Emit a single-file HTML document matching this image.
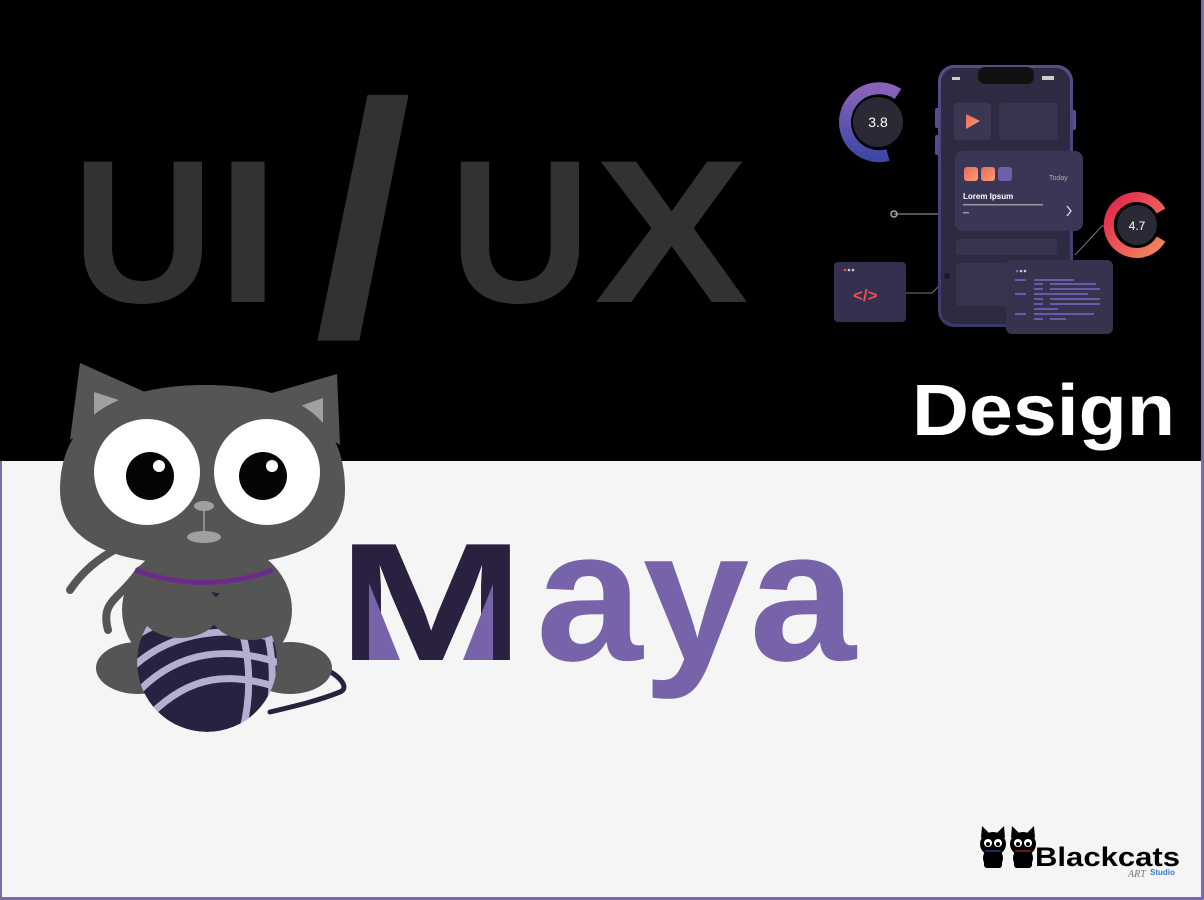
<!DOCTYPE html>
<html><head><meta charset="utf-8"><style>
html,body{margin:0;padding:0;background:#000;}
svg{display:block;}
</style></head><body>
<svg width="1204" height="900" viewBox="0 0 1204 900" xmlns="http://www.w3.org/2000/svg">
<defs>
<linearGradient id="g38" x1="0" y1="0" x2="0" y2="1"><stop offset="0" stop-color="#8a62b8"/><stop offset="1" stop-color="#3f47a6"/></linearGradient>
<linearGradient id="g47" x1="0" y1="0" x2="1" y2="1"><stop offset="0" stop-color="#e3204f"/><stop offset="1" stop-color="#f08a5d"/></linearGradient>
<linearGradient id="ph" x1="0" y1="0" x2="0" y2="1"><stop offset="0" stop-color="#5a4a8a"/><stop offset="1" stop-color="#3a3a6a"/></linearGradient>
<linearGradient id="org" x1="0" y1="0" x2="1" y2="1"><stop offset="0" stop-color="#f0685a"/><stop offset="1" stop-color="#f5a070"/></linearGradient>
<clipPath id="ball"><circle cx="207" cy="662" r="70"/></clipPath>
</defs>
<rect x="0" y="0" width="1204" height="461" fill="#000"/>
<rect x="0" y="461" width="1204" height="439" fill="#f5f5f5"/>
<rect x="0" y="461" width="2" height="439" fill="#7a6bb0"/>
<rect x="1201" y="0" width="3" height="900" fill="#7a6bb0"/>
<rect x="0" y="897" width="1204" height="3" fill="#7a6bb0"/>

<!-- UI / UX -->
<g fill="#333230" font-family="Liberation Sans, sans-serif" font-weight="bold" font-size="204">
<text x="72" y="302" textLength="142" lengthAdjust="spacingAndGlyphs">U</text>
<text x="216" y="302" textLength="64" lengthAdjust="spacingAndGlyphs">I</text>
<text x="449" y="302" textLength="142" lengthAdjust="spacingAndGlyphs">U</text>
<text x="594" y="302" textLength="155" lengthAdjust="spacingAndGlyphs">X</text>
</g>
<text x="314" y="334" font-family="Liberation Sans, sans-serif" font-weight="bold" font-size="330" fill="#333230" textLength="98" lengthAdjust="spacingAndGlyphs">/</text>

<!-- Design -->
<text x="912" y="435" font-family="Liberation Sans, sans-serif" font-weight="bold" font-size="72" fill="#fff" textLength="263" lengthAdjust="spacingAndGlyphs">Design</text>

<!-- Maya -->
<text x="337" y="660" font-family="Liberation Sans, sans-serif" font-weight="bold" font-size="168" fill="#29213f" textLength="188" lengthAdjust="spacingAndGlyphs">M</text>
<polygon points="369,583 400,660 369,660" fill="#7763a9"/>
<polygon points="493,584 493,660 463,660" fill="#7763a9"/>
<text x="536" y="660" font-family="Liberation Sans, sans-serif" font-weight="bold" font-size="187" fill="#7763a9" textLength="320" lengthAdjust="spacingAndGlyphs">aya</text>

<!-- Phone illustration -->
<g>
<line x1="894" y1="214" x2="940" y2="214" stroke="#888" stroke-width="1.2"/>
<circle cx="894" cy="214" r="3" fill="none" stroke="#aaa" stroke-width="1.5"/>
<polyline points="905,293 932,293 942,283" fill="none" stroke="#777" stroke-width="1"/>
<polyline points="1075,255 1102,226 1110,226" fill="none" stroke="#777" stroke-width="1"/>
<rect x="935" y="108" width="5" height="20" rx="2" fill="#5a4a9a"/>
<rect x="935" y="135" width="5" height="20" rx="2" fill="#5a4a9a"/>
<rect x="1071" y="110" width="5" height="20" rx="2" fill="#5a4a9a"/>
<rect x="938" y="65" width="135" height="262" rx="16" fill="url(#ph)"/>
<rect x="941" y="68" width="129" height="256" rx="14" fill="#2d2b42"/>
<rect x="978" y="67" width="56" height="17" rx="7" fill="#111"/>
<rect x="952" y="77" width="8" height="3" fill="#ccc"/>
<rect x="1042" y="76" width="12" height="4" fill="#ccc"/>
<rect x="954" y="103" width="37" height="37" rx="4" fill="#393752"/>
<polygon points="966,114 966,129 980,121" fill="url(#org)"/>
<rect x="999" y="103" width="59" height="37" rx="4" fill="#36344e"/>
<rect x="956" y="239" width="101" height="16" rx="3" fill="#36344e"/>
<rect x="956" y="263" width="74" height="43" rx="4" fill="#36344e"/>
<circle cx="947" cy="276" r="3" fill="#1a1a2a"/>
<rect x="955" y="151" width="128" height="80" rx="8" fill="#3a3756"/>
<rect x="964" y="167" width="14" height="14" rx="3" fill="url(#org)"/>
<rect x="981" y="167" width="14" height="14" rx="3" fill="url(#org)"/>
<rect x="998" y="167" width="14" height="14" rx="3" fill="#6e5fa8"/>
<text x="1049" y="180" font-family="Liberation Sans, sans-serif" font-size="7" fill="#aaa">Today</text>
<text x="963" y="199" font-family="Liberation Sans, sans-serif" font-weight="bold" font-size="8" fill="#fff">Lorem Ipsum</text>
<rect x="963" y="204" width="80" height="1.5" fill="#999"/>
<rect x="963" y="212" width="6" height="1.5" fill="#999"/>
<polyline points="1067,206 1071,211 1067,216" fill="none" stroke="#ddd" stroke-width="1.3"/>
<rect x="834" y="262" width="72" height="60" rx="4" fill="#343150"/>
<circle cx="845" cy="270" r="1.3" fill="#e54"/><circle cx="849" cy="270" r="1.3" fill="#ccc"/><circle cx="853" cy="270" r="1.3" fill="#ccc"/>
<text x="853" y="301" font-family="Liberation Sans, sans-serif" font-weight="bold" font-size="17" fill="#e8504f">&lt;/&gt;</text>
<rect x="1006" y="260" width="107" height="74" rx="6" fill="#36334f"/>
<circle cx="1017" cy="271" r="1.3" fill="#7a6bd0"/><circle cx="1021" cy="271" r="1.3" fill="#ccc"/><circle cx="1025" cy="271" r="1.3" fill="#ccc"/>
<g fill="#6c5aa8">
<rect x="1015" y="279" width="11" height="2"/><rect x="1034" y="279" width="40" height="2"/>
<rect x="1034" y="283" width="9" height="2"/><rect x="1050" y="283" width="46" height="2"/>
<rect x="1034" y="288" width="9" height="2"/><rect x="1050" y="288" width="50" height="2"/>
<rect x="1015" y="293" width="11" height="2"/><rect x="1034" y="293" width="54" height="2"/>
<rect x="1034" y="298" width="9" height="2"/><rect x="1050" y="298" width="50" height="2"/>
<rect x="1034" y="303" width="9" height="2"/><rect x="1050" y="303" width="50" height="2"/>
<rect x="1034" y="308" width="24" height="2"/>
<rect x="1015" y="313" width="11" height="2"/><rect x="1034" y="313" width="60" height="2"/>
<rect x="1034" y="318" width="9" height="2"/><rect x="1050" y="318" width="16" height="2"/>
</g>
<path d="M 898 94 A 34 34 0 1 0 888 155" fill="none" stroke="url(#g38)" stroke-width="12"/>
<circle cx="878" cy="122" r="25" fill="#2a2a36"/>
<text x="878" y="127" text-anchor="middle" font-family="Liberation Sans, sans-serif" font-size="14" fill="#fff">3.8</text>
<path d="M 1161 239 A 28 28 0 1 1 1161 211" fill="none" stroke="url(#g47)" stroke-width="10"/>
<circle cx="1137" cy="225" r="20" fill="#2a2a36"/>
<text x="1137" y="230" text-anchor="middle" font-family="Liberation Sans, sans-serif" font-size="12" fill="#fff">4.7</text>
</g>

<!-- Cat -->
<g>
<path d="M118 548 C 95 560, 80 575, 70 590" fill="none" stroke="#555" stroke-width="8" stroke-linecap="round"/>
<path d="M140 570 C 120 600, 100 600, 108 630" fill="none" stroke="#555" stroke-width="8" stroke-linecap="round"/>
<path d="M270 712 C 300 705, 320 700, 340 692 C 350 688, 340 675, 322 668" fill="none" stroke="#28213f" stroke-width="5" stroke-linecap="round"/>
<ellipse cx="138" cy="668" rx="42" ry="26" fill="#555"/>
<ellipse cx="290" cy="668" rx="42" ry="26" fill="#555"/>
<ellipse cx="207" cy="610" rx="85" ry="72" fill="#555"/>
<g clip-path="url(#ball)">
<circle cx="207" cy="662" r="70" fill="#28213f"/>
<g fill="none" stroke="#b5aed0" stroke-width="7">
<path d="M130 640 C 170 610, 220 610, 270 620"/>
<path d="M135 665 C 175 630, 230 625, 280 640"/>
<path d="M140 690 C 180 650, 230 645, 285 665"/>
<path d="M150 715 C 190 675, 230 670, 285 690"/>
<path d="M230 600 C 250 640, 255 690, 240 740"/>
<path d="M255 600 C 275 640, 278 690, 262 740"/>
</g>
</g>
<ellipse cx="180" cy="610" rx="40" ry="28" fill="#555"/>
<ellipse cx="250" cy="612" rx="40" ry="28" fill="#555"/>
<path d="M135 570 Q 204 595 273 570" fill="none" stroke="#6a2b8a" stroke-width="5"/>
<polygon points="70,440 80,363 145,392" fill="#555"/>
<polygon points="340,445 337,374 265,395" fill="#555"/>
<polygon points="94,432 94,392 125,402" fill="#a0a0a0"/>
<polygon points="323,437 323,398 292,409" fill="#a0a0a0"/>
<path d="M60 490 C 60 410, 130 385, 205 385 C 285 385, 345 410, 345 490 C 345 545, 290 565, 205 565 C 120 565, 60 545, 60 490 Z" fill="#555"/>
<circle cx="147" cy="472" r="53" fill="#fff"/>
<circle cx="267" cy="472" r="53" fill="#fff"/>
<circle cx="150" cy="476" r="24" fill="#050505"/>
<circle cx="263" cy="476" r="24" fill="#050505"/>
<circle cx="159" cy="466" r="6" fill="#fff"/>
<circle cx="272" cy="466" r="6" fill="#fff"/>
<ellipse cx="204" cy="506" rx="10" ry="5" fill="#a0a0a0"/>
<line x1="204" y1="508" x2="204" y2="533" stroke="#a0a0a0" stroke-width="1.5"/>
<ellipse cx="204" cy="537" rx="17" ry="6" fill="#a0a0a0"/>
</g>

<!-- Blackcats logo -->
<g>
<g fill="#000">
<ellipse cx="993" cy="844" rx="13" ry="12"/><polygon points="981,838 982,826 990,834"/><polygon points="1005,838 1004,826 996,834"/>
<ellipse cx="993" cy="858" rx="10" ry="10"/><rect x="984" y="858" width="18" height="10" rx="3"/>
<ellipse cx="1023" cy="844" rx="13" ry="12"/><polygon points="1011,838 1012,826 1020,834"/><polygon points="1035,838 1034,826 1026,834"/>
<ellipse cx="1023" cy="858" rx="10" ry="10"/><rect x="1014" y="858" width="18" height="10" rx="3"/>
</g>
<circle cx="988" cy="843" r="4" fill="#fff"/><circle cx="998" cy="843" r="4" fill="#fff"/>
<circle cx="1018" cy="843" r="4" fill="#fff"/><circle cx="1028" cy="843" r="4" fill="#fff"/>
<circle cx="988" cy="844" r="2" fill="#000"/><circle cx="998" cy="844" r="2" fill="#000"/>
<circle cx="1018" cy="844" r="2" fill="#000"/><circle cx="1028" cy="844" r="2" fill="#000"/>
<line x1="985" y1="851" x2="1001" y2="851" stroke="#2a4aa0" stroke-width="1.2"/>
<line x1="1015" y1="851" x2="1031" y2="851" stroke="#c02020" stroke-width="1.2"/>
<text x="1035" y="866" font-family="Liberation Sans, sans-serif" font-weight="bold" font-size="27" fill="#000" textLength="145" lengthAdjust="spacingAndGlyphs">Blackcats</text>
<text x="1128" y="877" font-family="Liberation Serif, serif" font-style="italic" font-size="10" fill="#777">ART</text>
<text x="1150" y="875" font-family="Liberation Sans, sans-serif" font-weight="bold" font-size="8" fill="#3a7ac8">Studio</text>
</g>
</svg>
</body></html>
